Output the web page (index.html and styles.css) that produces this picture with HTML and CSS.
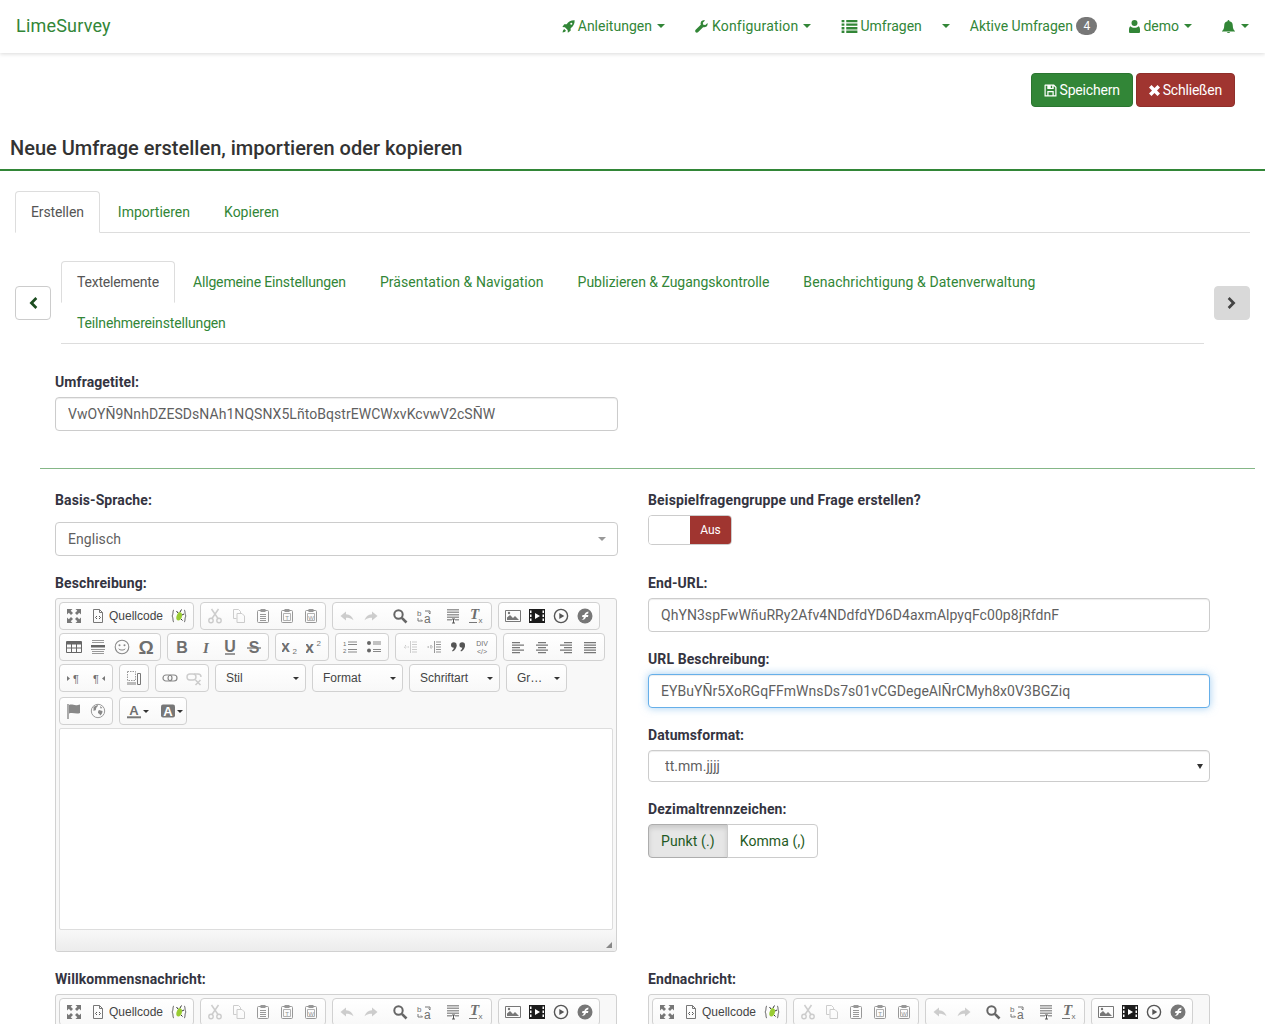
FILE: index.html
```html
<!DOCTYPE html>
<html lang="de">
<head>
    <meta charset="UTF-8">
    <title>Neue Umfrage erstellen</title>
    <link rel="stylesheet" href="styles.css">
</head>
<body>
<svg class="sprite" xmlns="http://www.w3.org/2000/svg">
    <!-- nav icons -->
    <symbol id="n-rocket" viewBox="0 0 14 14"><path d="M13.6.4C10 .2 7 1.700 5 4.600H2.400L.4 7.600l2.700.2 3 3 .2 2.800 3-2V9c2.900-2 4.500-5 4.300-8.600zM10 3a1.100 1.100 0 1 1 0 2.200A1.100 1.100 0 0 1 10 3zM2.400 9.700C1.300 10.500.8 11.800.6 13.400c1.600-.2 2.900-.7 3.700-1.800z"/></symbol>
    <symbol id="n-wrench" viewBox="0 0 14 14"><path d="M13.500 3.200 11.100 5.500 8.900 5 8.400 2.900 10.800.5C9 0 7.300.6 6.500 1.900c-.6 1-.7 2.100-.3 3.200L.7 10.600c-.7.700-.7 1.800 0 2.500s1.800.7 2.500 0l5.500-5.400c1.100.4 2.200.3 3.200-.3 1.300-.8 2-2.800 1.600-4.200z"/></symbol>
    <symbol id="n-list" viewBox="0 0 17 14"><path d="M0 0h3v2.500H0zM5 0h12v2.500H5zM0 3.800h3v2.500H0zM5 3.800h12v2.500H5zM0 7.600h3v2.500H0zM5 7.600h12v2.500H5zM0 11.400h3V14H0zM5 11.400h12V14H5z"/></symbol>
    <symbol id="n-user" viewBox="0 0 11 13"><circle cx="5.500" cy="3" r="3"/><path d="M1.500 6.200c1 1 2.500 1.500 4 1.500s3-.5 4-1.500c1 .4 1.500 1.800 1.500 3.500v2c0 .8-.5 1.300-1.300 1.300H1.300C.5 13 0 12.500 0 11.700v-2C0 8 .5 6.600 1.500 6.200z"/></symbol>
    <symbol id="n-bell" viewBox="0 0 15 14"><path d="M7.500 0c.6 0 1 .4 1 1v.4c2.200.4 3.600 2 3.600 4.400 0 3.400 1 4.800 2.400 6v.700H.5v-.700c1.400-1.200 2.400-2.600 2.400-6 0-2.400 1.400-4 3.600-4.400V1c0-.6.400-1 1-1zM5.800 13h3.400c0 .6-.8 1-1.700 1s-1.700-.4-1.700-1z"/></symbol>
    <symbol id="n-save" viewBox="0 0 13 13"><path d="M1 .5h9l2.500 2.500v9.500H.5V1zM1.700 1.700v9.600h1.600V7h6.400v4.300h1.600V3.500l-1.600-1.600V5H3.300V1.700zM4.500 8.200v3.100h4V8.200zM6.800 1.700V4h1.400V1.700z" fill-rule="evenodd"/></symbol>
    <symbol id="n-times" viewBox="0 0 11 11"><path d="M2.500 0 5.500 3 8.500 0 11 2.500l-3 3 3 3L8.500 11l-3-3-3 3L0 8.500l3-3-3-3z"/></symbol>
    <symbol id="n-left" viewBox="0 0 10 14"><path d="M7.400 1 9.300 3 5.400 7l3.900 4-1.900 2L1.500 7z"/></symbol>
    <symbol id="n-right" viewBox="0 0 10 14"><path d="M2.600 1 .7 3l3.900 4-3.900 4 1.900 2 5.900-6z"/></symbol>

    <!-- editor icons -->
    <symbol id="i-max" viewBox="0 0 16 16"><path d="M1 1h5.500L4.700 2.800 7 5 5 7 2.800 4.700 1 6.500zM15 1v5.500l-1.800-1.800L11 7 9 5l2.300-2.200L9.500 1zM1 15V9.500l1.800 1.800L5 9l2 2-2.300 2.200L6.500 15zM15 15H9.500l1.800-1.800L9 11l2-2 2.200 2.300L15 9.500z"/></symbol>
    <symbol id="i-source" viewBox="0 0 16 16"><path d="M3.500 1.500h6l3 3v10h-9zM9.500 1.500v3h3" fill="none" stroke="#777"/><path d="M7 8 5.500 9.500 7 11M9 8l1.500 1.500L9 11" fill="none" stroke="#555"/></symbol>
    <symbol id="i-bug" viewBox="0 0 16 16"><path d="M3 2C1.500 2 2.500 6.500 1 8c1.500 1.500.5 6 2 6M13 2c1.500 0 .5 4.500 2 6-1.500 1.500-.5 6-2 6" fill="none" stroke="#555"/><path d="M8.500 4c2.200.2 3.100 2.400 2.300 5-.7 2.400-2.600 4-4.300 3.300C4.900 11.700 5 9 6 7c.6-1.500 1.400-3 2.500-3z" fill="#9c3"/><path d="M9 4 10.500 1.500M7 5 5.500 3M11 7l2-1M10 11l1.500 1.500" stroke="#333" fill="none"/></symbol>
    <symbol id="i-cut" viewBox="0 0 16 16"><circle cx="4" cy="12.500" r="2.200" fill="none" stroke="#777" stroke-width="1.400"/><circle cx="12" cy="12.500" r="2.200" fill="none" stroke="#777" stroke-width="1.400"/><path d="M5 10.500 11.500 1M11 10.500 4.500 1" stroke="#777" stroke-width="1.500" fill="none"/></symbol>
    <symbol id="i-copy" viewBox="0 0 16 16"><path d="M2.500 1.500h5l2 2v2M2.500 1.500v9h3M6 5.500h5l2.500 2.500v6.500H6z" fill="none" stroke="#777"/></symbol>
    <symbol id="i-paste" viewBox="0 0 16 16"><path d="M3.500 2.500h9a1 1 0 0 1 1 1v10a1 1 0 0 1-1 1h-9a1 1 0 0 1-1-1v-10a1 1 0 0 1 1-1z" fill="none" stroke="#777"/><path d="M5.500 1h5v3h-5z" fill="#777"/><path d="M5 6.500h6M5 8.500h6M5 10.500h6M5 12.500h6" stroke="#777" fill="none"/></symbol>
    <symbol id="i-paste-t" viewBox="0 0 16 16"><path d="M3.500 2.500h9a1 1 0 0 1 1 1v10a1 1 0 0 1-1 1h-9a1 1 0 0 1-1-1v-10a1 1 0 0 1 1-1z" fill="none" stroke="#777"/><path d="M5.500 1h5v3h-5z" fill="#777"/><path d="M4.500 5.500h7v7h-7z" fill="none" stroke="#999"/><text x="8" y="11.500" class="ico-tiny" text-anchor="middle">T</text></symbol>
    <symbol id="i-paste-w" viewBox="0 0 16 16"><path d="M3.500 2.500h9a1 1 0 0 1 1 1v10a1 1 0 0 1-1 1h-9a1 1 0 0 1-1-1v-10a1 1 0 0 1 1-1z" fill="none" stroke="#777"/><path d="M5.500 1h5v3h-5z" fill="#777"/><path d="M4.500 5.500h7v7h-7z" fill="none" stroke="#999"/><text x="8" y="11.500" class="ico-tiny" text-anchor="middle">W</text></symbol>
    <symbol id="i-undo" viewBox="0 0 16 16"><path d="M7 3.500 1.500 8 7 12.500V9.800c2.800 0 5 .6 7.500 2.500C13.500 8.800 11 6.700 7 6.300z" fill="#777"/></symbol>
    <symbol id="i-redo" viewBox="0 0 16 16"><path d="M9 3.500 14.500 8 9 12.500V9.800c-2.800 0-5 .6-7.500 2.500C2.500 8.800 5 6.700 9 6.300z" fill="#777"/></symbol>
    <symbol id="i-find" viewBox="0 0 16 16"><circle cx="6.500" cy="6.500" r="4.200" fill="none" stroke="#666" stroke-width="2"/><path d="m9.800 9.800 4.700 4.700" stroke="#666" stroke-width="2.600" fill="none"/></symbol>
    <symbol id="i-replace" viewBox="0 0 16 16"><text x="1" y="8" class="ico-small">b</text><text x="8" y="15" class="ico-rep">a</text><path d="M9 3h5v3M14 6l-1.500-1.500M2 10v3h4.500M6.500 13 5 11.500" fill="none" stroke="#777"/></symbol>
    <symbol id="i-selectall" viewBox="0 0 16 16"><path d="M2 1h12v1.500H2zM2 3.500h12V5H2zM2 6h12v1.500H2zM2 8.500h12V10H2zM2 11h5v1.500H2zM10 11h4v1.500h-4z" fill="#999"/><path d="M7 11h3M7 15h3M8.500 11v4" stroke="#555" fill="none"/></symbol>
    <symbol id="i-clear" viewBox="0 0 16 16"><text x="1" y="11" class="ico-ital">T</text><text x="9.500" y="14.500" class="ico-small">x</text><path d="M0 14.500h8" stroke="#777" fill="none"/></symbol>
    <symbol id="i-image" viewBox="0 0 16 16"><path d="M.5 2.500h15v11H.5z" fill="none" stroke="#777"/><path d="M2 12V9.500L5 7l3 3 2-2 4 4z" fill="#777"/><circle cx="4" cy="5" r="1.200" fill="#777"/></symbol>
    <symbol id="i-video" viewBox="0 0 16 16"><path d="M0 1h16v14H0z" fill="#1c1c1c"/><path d="M1 2.500h1.500V5H1zM1 6.500h1.500V9H1zM1 10.500h1.500V13H1zM13.500 2.500H15V5h-1.500zM13.500 6.500H15V9h-1.500zM13.500 10.500H15V13h-1.500zM6 5l5 3-5 3z" fill="#fff"/></symbol>
    <symbol id="i-play" viewBox="0 0 16 16"><circle cx="8" cy="8" r="6.600" fill="none" stroke="#555" stroke-width="1.400"/><path d="m6.300 5 5 3-5 3z" fill="#555"/></symbol>
    <symbol id="i-flash" viewBox="0 0 16 16"><circle cx="8" cy="8" r="7.500" fill="#777"/><path d="M11.500 3.500C9 3.800 7.800 5.200 7.300 7H5.500L5 9h1.800c-.3 1.500-1 2.500-2.300 3 2.500 0 4-1.200 4.500-3h2l.4-2H9c.4-.8 1.200-1.300 2.200-1.500z" fill="#fff"/></symbol>
    <symbol id="i-table" viewBox="0 0 16 16"><path d="M.5 2.500h15v11H.5z" fill="none" stroke="#666"/><path d="M1 3h14v2.500H1z" fill="#666"/><path d="M1 9h14M5.500 5v8M10.500 5v8" stroke="#666" fill="none"/></symbol>
    <symbol id="i-hr" viewBox="0 0 16 16"><path d="M2 1.500h12M2 3.500h12M1 10.500h14M2 12.500h12M2 14.500h12" stroke="#999" fill="none"/><path d="M1 6h14v2.500H1z" fill="#666"/></symbol>
    <symbol id="i-smiley" viewBox="0 0 16 16"><circle cx="8" cy="8" r="6.800" fill="none" stroke="#888" stroke-width="1.100"/><circle cx="5.500" cy="6.300" r="1" fill="#888"/><circle cx="10.500" cy="6.300" r="1" fill="#888"/><path d="M4.700 9.800C5.500 11.500 10.500 11.500 11.300 9.800" fill="none" stroke="#888"/></symbol>
    <symbol id="i-omega" viewBox="0 0 16 16"><text x="8" y="14.500" class="ico-omega" text-anchor="middle">Ω</text></symbol>
    <symbol id="i-bold" viewBox="0 0 16 16"><text x="8" y="14" class="ico-big" text-anchor="middle">B</text></symbol>
    <symbol id="i-italic" viewBox="0 0 16 16"><text x="8" y="14" class="ico-ital" text-anchor="middle">I</text></symbol>
    <symbol id="i-under" viewBox="0 0 16 16"><text x="8" y="12.500" class="ico-big" text-anchor="middle">U</text><path d="M3 15h10" stroke="#777" stroke-width="1.500"/></symbol>
    <symbol id="i-strike" viewBox="0 0 16 16"><text x="8" y="14" class="ico-big" text-anchor="middle">S</text><path d="M1 9h14" stroke="#777" stroke-width="1.300"/></symbol>
    <symbol id="i-sub" viewBox="0 0 16 16"><text x="-1" y="12.500" class="ico-x">x</text><text x="10.500" y="15" class="ico-small">2</text></symbol>
    <symbol id="i-sup" viewBox="0 0 16 16"><text x="-1" y="13.500" class="ico-x">x</text><text x="10.500" y="7" class="ico-small">2</text></symbol>
    <symbol id="i-ol" viewBox="0 0 16 16"><text x="1" y="7" class="ico-tiny">1</text><text x="1" y="14" class="ico-tiny">2</text><path d="M6 3h9M6 5.500h9M6 10.500h9M6 13h9" stroke="#888" fill="none"/></symbol>
    <symbol id="i-ul" viewBox="0 0 16 16"><circle cx="3" cy="4" r="2" fill="#666"/><circle cx="3" cy="11.500" r="2" fill="#666"/><path d="M7 3h8M7 5h8M7 10.500h8M7 12.500h8" stroke="#888" fill="none"/></symbol>
    <symbol id="i-outdent" viewBox="0 0 16 16"><path d="M8.500 2v12M10 3h5M10 5.500h5M10 8h5M10 10.500h5M10 13h5" stroke="#777" fill="none"/><path d="M7 8H2M4 6 2 8l2 2" stroke="#777" stroke-dasharray="1.500 1" fill="none"/></symbol>
    <symbol id="i-indent" viewBox="0 0 16 16"><path d="M8.500 2v12M10 3h5M10 5.500h5M10 8h5M10 10.500h5M10 13h5" stroke="#777" fill="none"/><path d="M1.500 8h5M4.500 6l2 2-2 2" stroke="#777" stroke-dasharray="1.500 1" fill="none"/></symbol>
    <symbol id="i-quote" viewBox="0 0 16 16"><circle cx="3.800" cy="6" r="2.800" fill="#555"/><circle cx="12.200" cy="6" r="2.800" fill="#555"/><path d="M6.600 6c0 3-1.500 5.500-4 6.500l-.5-1C3.500 10.500 4 9 4 8zM15 6c0 3-1.500 5.500-4 6.500l-.5-1c1.400-1 1.900-2.500 1.900-3.500z" fill="#555"/></symbol>
    <symbol id="i-div" viewBox="0 0 16 16"><text x="8" y="7" class="ico-div" text-anchor="middle">DIV</text><text x="8" y="15" class="ico-div" text-anchor="middle">&lt;/&gt;</text></symbol>
    <symbol id="i-left" viewBox="0 0 16 16"><path d="M2 3h8v1.200H2zM2 5.500h12v1.200H2zM2 8h8v1.200H2zM2 10.500h12v1.200H2zM2 13h8v1.200H2z" fill="#777"/></symbol>
    <symbol id="i-center" viewBox="0 0 16 16"><path d="M4 3h8v1.200H4zM2 5.500h12v1.200H2zM4 8h8v1.200H4zM2 10.500h12v1.200H2zM4 13h8v1.200H4z" fill="#777"/></symbol>
    <symbol id="i-right" viewBox="0 0 16 16"><path d="M6 3h8v1.200H6zM2 5.500h12v1.200H2zM6 8h8v1.200H6zM2 10.500h12v1.200H2zM6 13h8v1.200H6z" fill="#777"/></symbol>
    <symbol id="i-just" viewBox="0 0 16 16"><path d="M2 3h12v1.200H2zM2 5.500h12v1.200H2zM2 8h12v1.200H2zM2 10.500h12v1.200H2zM2 13h12v1.200H2z" fill="#777"/></symbol>
    <symbol id="i-ltr" viewBox="0 0 16 16"><path d="m1 6 3 2.500L1 11z" fill="#777"/><text x="10" y="13" class="ico-mid2" text-anchor="middle">¶</text></symbol>
    <symbol id="i-rtl" viewBox="0 0 16 16"><path d="m15 6-3 2.500 3 2.500z" fill="#777"/><text x="6" y="13" class="ico-mid2" text-anchor="middle">¶</text></symbol>
    <symbol id="i-blocks" viewBox="0 0 16 16"><path d="M1.500 1.500h8v9h-8z" fill="none" stroke="#999" stroke-dasharray="1.500 1"/><path d="M1 12h9v3H1z" fill="#bbb"/><path d="M11.500 3.500h3v11h-3z" fill="none" stroke="#777"/></symbol>
    <symbol id="i-link" viewBox="0 0 16 16"><rect x="1" y="5" width="9" height="6" rx="3" fill="none" stroke="#888" stroke-width="1.200"/><rect x="6" y="5" width="9" height="6" rx="3" fill="none" stroke="#888" stroke-width="1.200"/></symbol>
    <symbol id="i-unlink" viewBox="0 0 16 16"><rect x="1" y="4" width="9" height="6" rx="3" fill="none" stroke="#777" stroke-width="1.400"/><path d="M8 4h4a3 3 0 0 1 3 3" fill="none" stroke="#777" stroke-width="1.400"/><path d="m9.500 10 5 5M14.500 10l-5 5" stroke="#777" stroke-width="1.500"/></symbol>
    <symbol id="i-flag" viewBox="0 0 16 16"><path d="M2 1v15" stroke="#888" stroke-width="1.400"/><path d="M3 2c3-1.500 5 1 9 0l2-.5V10c-4 1.500-7-1-11 .5z" fill="#888"/></symbol>
    <symbol id="i-globe" viewBox="0 0 16 16"><circle cx="8" cy="8" r="6.700" fill="none" stroke="#999" stroke-width="1"/><path d="M3.500 4c2-1 3-1.700 4.500-2 0 2-2 2-2 4s-1.500 1-2.500 2zM9 7l3.500 1c0 2-1 3.500-2.500 4.500 0-2-1-1.500-2-2.500 0-1 0-2 1-3zM10 3l2.500 2-2 .5z" fill="#888"/></symbol>
    <symbol id="i-color" viewBox="0 0 16 16"><text x="8" y="11.500" class="ico-big2" text-anchor="middle">A</text><path d="M1 14.300h14" stroke="#777" stroke-width="2"/></symbol>
    <symbol id="i-bg" viewBox="0 0 16 16"><rect x="1" y="1.500" width="14" height="13" rx="2" fill="#777"/><text x="8" y="12.500" class="ico-big2 ico-white" text-anchor="middle">A</text></symbol>
</svg>

<nav class="topbar">
    <a class="brand" href="#">LimeSurvey</a>
    <ul class="topnav">
        <li><a href="#"><svg class="nico"><use href="#n-rocket"/></svg>Anleitungen<i class="caret"></i></a></li>
        <li><a href="#" class="konfig"><svg class="nico nico-wrench"><use href="#n-wrench"/></svg>Konfiguration<i class="caret"></i></a></li>
        <li><a href="#" class="tight"><svg class="nico nico-list"><use href="#n-list"/></svg>Umfragen</a></li>
        <li><a href="#" class="only-caret"><i class="caret"></i></a></li>
        <li><a href="#" class="badged">Aktive Umfragen <span class="badge">4</span></a></li>
        <li><a href="#" class="demo"><svg class="nico nico-user"><use href="#n-user"/></svg>demo<i class="caret"></i></a></li>
        <li><a href="#" class="alerts"><svg class="nico nico-bell"><use href="#n-bell"/></svg><i class="caret"></i></a></li>
    </ul>
</nav>

<div class="actions">
    <a class="btn btn-save" href="#"><svg class="bico"><use href="#n-save"/></svg>Speichern</a>
    <a class="btn btn-close" href="#"><svg class="bico bico-x"><use href="#n-times"/></svg>Schließen</a>
</div>

<h3 class="pagetitle">Neue Umfrage erstellen, importieren oder kopieren</h3>

<div class="content">
    <ul class="tabs">
        <li class="active"><a href="#">Erstellen</a></li>
        <li><a href="#">Importieren</a></li>
        <li><a href="#">Kopieren</a></li>
    </ul>

    <div class="scroller">
        <button class="arrow" type="button"><svg class="aico"><use href="#n-left"/></svg></button>
        <ul class="tabs tabs-wrap">
            <li class="active"><a href="#">Textelemente</a></li>
            <li class="tnarrow"><a href="#">Allgemeine Einstellungen</a></li>
            <li class="twide"><a href="#">Präsentation &amp; Navigation</a></li>
            <li class="tslim"><a href="#">Publizieren &amp; Zugangskontrolle</a></li>
            <li class="twide"><a href="#">Benachrichtigung &amp; Datenverwaltung</a></li>
            <li class="tnarrow"><a href="#">Teilnehmereinstellungen</a></li>
        </ul>
        <button class="arrow arrow-off" type="button"><svg class="aico"><use href="#n-right"/></svg></button>
    </div>

    <div class="titlebox">
        <label class="lbl">Umfragetitel:</label>
        <input class="field" type="text" value="VwOYÑ9NnhDZESDsNAh1NQSNX5LñtoBqstrEWCWxvKcvwV2cSÑW">
    </div>
    <hr class="sep">

    <div class="cols">
        <div class="group group-lang">
            <label class="lbl lbl-wide">Basis-Sprache:</label>
            <div class="field fake-select">Englisch<i class="caret caret-grey"></i></div>
        </div>
        <div class="group">
            <label class="lbl lbl-long">Beispielfragengruppe und Frage erstellen?</label>
            <div class="toggle"><span class="toggle-blank"></span><span class="toggle-off">Aus</span></div>
        </div>

        <div class="group">
            <label class="lbl">Beschreibung:</label>
            <div class="editor">
                <div class="tb-row">
                    <span class="tb"><a class="b"><svg class="ico"><use href="#i-max"/></svg></a><a class="b b-src"><svg class="ico"><use href="#i-source"/></svg><span>Quellcode</span></a><a class="b"><svg class="ico"><use href="#i-bug"/></svg></a></span>
                    <span class="tb"><a class="b off"><svg class="ico"><use href="#i-cut"/></svg></a><a class="b off"><svg class="ico"><use href="#i-copy"/></svg></a><a class="b dim"><svg class="ico"><use href="#i-paste"/></svg></a><a class="b dim"><svg class="ico"><use href="#i-paste-t"/></svg></a><a class="b dim"><svg class="ico"><use href="#i-paste-w"/></svg></a></span>
                    <span class="tb"><a class="b off"><svg class="ico"><use href="#i-undo"/></svg></a><a class="b off"><svg class="ico"><use href="#i-redo"/></svg></a><i class="tsep"></i><a class="b"><svg class="ico"><use href="#i-find"/></svg></a><a class="b"><svg class="ico"><use href="#i-replace"/></svg></a><i class="tsep"></i><a class="b"><svg class="ico"><use href="#i-selectall"/></svg></a><a class="b"><svg class="ico"><use href="#i-clear"/></svg></a></span>
                    <span class="tb"><a class="b"><svg class="ico"><use href="#i-image"/></svg></a><a class="b"><svg class="ico"><use href="#i-video"/></svg></a><a class="b"><svg class="ico"><use href="#i-play"/></svg></a><a class="b"><svg class="ico"><use href="#i-flash"/></svg></a></span>
                </div>
                <div class="tb-row">
                    <span class="tb"><a class="b"><svg class="ico"><use href="#i-table"/></svg></a><a class="b"><svg class="ico"><use href="#i-hr"/></svg></a><a class="b"><svg class="ico"><use href="#i-smiley"/></svg></a><a class="b"><svg class="ico"><use href="#i-omega"/></svg></a></span>
                    <span class="tb"><a class="b"><svg class="ico"><use href="#i-bold"/></svg></a><a class="b"><svg class="ico"><use href="#i-italic"/></svg></a><a class="b"><svg class="ico"><use href="#i-under"/></svg></a><a class="b"><svg class="ico"><use href="#i-strike"/></svg></a></span>
                    <span class="tb"><a class="b"><svg class="ico"><use href="#i-sub"/></svg></a><a class="b"><svg class="ico"><use href="#i-sup"/></svg></a></span>
                    <span class="tb"><a class="b"><svg class="ico"><use href="#i-ol"/></svg></a><a class="b"><svg class="ico"><use href="#i-ul"/></svg></a></span>
                    <span class="tb"><a class="b off"><svg class="ico"><use href="#i-outdent"/></svg></a><a class="b dim"><svg class="ico"><use href="#i-indent"/></svg></a><a class="b"><svg class="ico"><use href="#i-quote"/></svg></a><a class="b"><svg class="ico"><use href="#i-div"/></svg></a></span>
                    <span class="tb"><a class="b"><svg class="ico"><use href="#i-left"/></svg></a><a class="b"><svg class="ico"><use href="#i-center"/></svg></a><a class="b"><svg class="ico"><use href="#i-right"/></svg></a><a class="b"><svg class="ico"><use href="#i-just"/></svg></a></span>
                </div>
                <div class="tb-row">
                    <span class="tb"><a class="b"><svg class="ico"><use href="#i-ltr"/></svg></a><a class="b"><svg class="ico"><use href="#i-rtl"/></svg></a></span>
                    <span class="tb"><a class="b"><svg class="ico"><use href="#i-blocks"/></svg></a></span>
                    <span class="tb"><a class="b"><svg class="ico"><use href="#i-link"/></svg></a><a class="b off"><svg class="ico"><use href="#i-unlink"/></svg></a></span>
                    <span class="tb combo">Stil<i class="combo-arrow"></i></span>
                    <span class="tb combo">Format<i class="combo-arrow"></i></span>
                    <span class="tb combo">Schriftart<i class="combo-arrow"></i></span>
                    <span class="tb combo combo-short">Gr…<i class="combo-arrow"></i></span>
                </div>
                <div class="tb-row tb-last">
                    <span class="tb"><a class="b"><svg class="ico"><use href="#i-flag"/></svg></a><a class="b"><svg class="ico"><use href="#i-globe"/></svg></a></span>
                    <span class="tb"><a class="b b-color"><svg class="ico"><use href="#i-color"/></svg><i class="mini-arrow"></i></a><a class="b b-color"><svg class="ico"><use href="#i-bg"/></svg><i class="mini-arrow"></i></a></span>
                </div>
                <div class="edit-area"></div>
                <div class="edit-foot"><i class="grip"></i></div>
            </div>
        </div>

        <div class="stack">
            <div class="group">
                <label class="lbl">End-URL:</label>
                <input class="field" type="text" value="QhYN3spFwWñuRRy2Afv4NDdfdYD6D4axmAlpyqFc00p8jRfdnF">
            </div>
            <div class="group">
                <label class="lbl">URL Beschreibung:</label>
                <input class="field field-focus" type="text" value="EYBuYÑr5XoRGqFFmWnsDs7s01vCGDegeAlÑrCMyh8x0V3BGZiq">
            </div>
            <div class="group">
                <label class="lbl">Datumsformat:</label>
                <div class="select-wrap"><select class="field native"><option>tt.mm.jjjj</option></select></div>
            </div>
            <div class="group">
                <label class="lbl">Dezimaltrennzeichen:</label>
                <div class="btn-group"><span class="seg seg-on">Punkt (.)</span><span class="seg">Komma (,)</span></div>
            </div>
        </div>

        <div class="group">
            <label class="lbl">Willkommensnachricht:</label>
            <div class="editor">
                <div class="tb-row">
                    <span class="tb"><a class="b"><svg class="ico"><use href="#i-max"/></svg></a><a class="b b-src"><svg class="ico"><use href="#i-source"/></svg><span>Quellcode</span></a><a class="b"><svg class="ico"><use href="#i-bug"/></svg></a></span>
                    <span class="tb"><a class="b off"><svg class="ico"><use href="#i-cut"/></svg></a><a class="b off"><svg class="ico"><use href="#i-copy"/></svg></a><a class="b dim"><svg class="ico"><use href="#i-paste"/></svg></a><a class="b dim"><svg class="ico"><use href="#i-paste-t"/></svg></a><a class="b dim"><svg class="ico"><use href="#i-paste-w"/></svg></a></span>
                    <span class="tb"><a class="b off"><svg class="ico"><use href="#i-undo"/></svg></a><a class="b off"><svg class="ico"><use href="#i-redo"/></svg></a><i class="tsep"></i><a class="b"><svg class="ico"><use href="#i-find"/></svg></a><a class="b"><svg class="ico"><use href="#i-replace"/></svg></a><i class="tsep"></i><a class="b"><svg class="ico"><use href="#i-selectall"/></svg></a><a class="b"><svg class="ico"><use href="#i-clear"/></svg></a></span>
                    <span class="tb"><a class="b"><svg class="ico"><use href="#i-image"/></svg></a><a class="b"><svg class="ico"><use href="#i-video"/></svg></a><a class="b"><svg class="ico"><use href="#i-play"/></svg></a><a class="b"><svg class="ico"><use href="#i-flash"/></svg></a></span>
                </div>
            </div>
        </div>
        <div class="group">
            <label class="lbl">Endnachricht:</label>
            <div class="editor">
                <div class="tb-row">
                    <span class="tb"><a class="b"><svg class="ico"><use href="#i-max"/></svg></a><a class="b b-src"><svg class="ico"><use href="#i-source"/></svg><span>Quellcode</span></a><a class="b"><svg class="ico"><use href="#i-bug"/></svg></a></span>
                    <span class="tb"><a class="b off"><svg class="ico"><use href="#i-cut"/></svg></a><a class="b off"><svg class="ico"><use href="#i-copy"/></svg></a><a class="b dim"><svg class="ico"><use href="#i-paste"/></svg></a><a class="b dim"><svg class="ico"><use href="#i-paste-t"/></svg></a><a class="b dim"><svg class="ico"><use href="#i-paste-w"/></svg></a></span>
                    <span class="tb"><a class="b off"><svg class="ico"><use href="#i-undo"/></svg></a><a class="b off"><svg class="ico"><use href="#i-redo"/></svg></a><i class="tsep"></i><a class="b"><svg class="ico"><use href="#i-find"/></svg></a><a class="b"><svg class="ico"><use href="#i-replace"/></svg></a><i class="tsep"></i><a class="b"><svg class="ico"><use href="#i-selectall"/></svg></a><a class="b"><svg class="ico"><use href="#i-clear"/></svg></a></span>
                    <span class="tb"><a class="b"><svg class="ico"><use href="#i-image"/></svg></a><a class="b"><svg class="ico"><use href="#i-video"/></svg></a><a class="b"><svg class="ico"><use href="#i-play"/></svg></a><a class="b"><svg class="ico"><use href="#i-flash"/></svg></a></span>
                </div>
            </div>
        </div>
    </div>
</div>
</body>
</html>
```

FILE: styles.css
```css
* {
    box-sizing: border-box;
}
html, body {
    margin: 0;
    height: 1024px;
    overflow: hidden;
}
body {
    background: #fff;
    color: #333;
    font: 14px/20px Roboto, "Liberation Sans", sans-serif;
}
a {
    color: #328637;
    text-decoration: none;
}
ul {
    margin: 0;
    padding: 0;
    list-style: none;
}
.sprite {
    display: none;
}

/* top bar */
.topbar {
    display: flex;
    justify-content: space-between;
    align-items: center;
    height: 53px;
    padding-bottom: 1px;
    background: #fff;
    box-shadow: 0 1px 4px rgba(0,0,0,.15);
}
.brand {
    margin-left: 16px;
    font-size: 18px;
    letter-spacing: .2px;
}
.topnav {
    display: flex;
}
.topnav a {
    display: flex;
    align-items: center;
    height: 52px;
    padding: 0 15px;
}
.topnav a.konfig {
    letter-spacing: .2px;
}
.topnav a.tight {
    padding-right: 5px;
}
.topnav a.only-caret {
    padding: 0 5px 0 15px;
}
.topnav a.only-caret .caret {
    margin-left: 0;
}
.topnav a.badged {
    white-space: pre;
    padding-right: 17px;
}
.topnav a.demo {
    padding-right: 14px;
}
.topnav a.alerts {
    padding-right: 16px;
}
.nico {
    width: 13px;
    height: 13px;
    margin-right: 3px;
    fill: #328637;
}
.nico-wrench {
    margin-right: 4px;
}
.nico-list {
    width: 17px;
    margin-right: 2px;
}
.nico-user {
    width: 11px;
    margin-right: 3px;
}
.nico-bell {
    width: 15px;
    margin-right: 0;
}
.caret {
    display: inline-block;
    width: 0;
    height: 0;
    margin-left: 5px;
    border-top: 4px solid #328637;
    border-left: 4px solid transparent;
    border-right: 4px solid transparent;
}
.badge {
    display: inline-block;
    min-width: 21px;
    height: 18px;
    margin-left: 0;
    padding: 0 6px;
    border-radius: 10px;
    background: #777;
    color: #fff;
    font-size: 12px;
    line-height: 18px;
    text-align: center;
}

/* save / close */
.actions {
    display: flex;
    justify-content: flex-end;
    gap: 3px;
    padding: 20px 30px 0 0;
}
.btn {
    display: flex;
    align-items: center;
    height: 34px;
    padding: 0 12px;
    border-radius: 4px;
    color: #fff;
    letter-spacing: -.2px;
}
.btn-save {
    background: #328637;
    border: 1px solid #2b7530;
}
.btn-close {
    background: #a03530;
    border: 1px solid #8f2f2a;
}
.bico {
    width: 13px;
    height: 13px;
    margin-right: 3px;
    fill: #fff;
}
.bico-x {
    width: 11px;
    height: 11px;
}
.pagetitle {
    margin: 25px 0 0;
    padding: 0 10px 4px;
    border-bottom: 2px solid #328637;
    color: #333;
    font-size: 20px;
    font-weight: 500;
    line-height: 33px;
}

/* tabs */
.content {
    padding: 20px 15px 0;
}
.tabs {
    display: flex;
    flex-wrap: wrap;
    border-bottom: 1px solid #ddd;
}
.tabs li {
    margin-right: 2px;
    margin-bottom: -1px;
}
.tabs a {
    display: block;
    height: 42px;
    padding: 10px 15px;
    border: 1px solid transparent;
    border-radius: 4px 4px 0 0;
}
.tabs .active a {
    border-color: #ddd #ddd #fff;
    background: #fff;
    color: #555;
    letter-spacing: -.12px;
}
.tabs-wrap .active a {
    letter-spacing: -.2px;
}
.tabs .tnarrow a {
    letter-spacing: -.15px;
}
.tabs .twide a {
    letter-spacing: .08px;
}
.tabs .tslim a {
    letter-spacing: -.04px;
}
.scroller {
    display: flex;
    align-items: flex-start;
    gap: 10px;
    margin-top: 28px;
}
.tabs-wrap {
    flex: 1;
}
.arrow {
    flex: none;
    width: 36px;
    height: 34px;
    margin-top: 25px;
    padding: 0;
    border: 1px solid #ccc;
    border-radius: 4px;
    background: #fff;
}
.arrow-off {
    background: #d9d9d9;
    border-color: #d9d9d9;
}
.aico {
    width: 10px;
    height: 14px;
    margin-top: 3px;
    fill: #1c4d20;
}
.arrow-off .aico {
    fill: #444;
}

/* form */
.titlebox {
    margin: 28px 0 0 40px;
    width: 563px;
}
.lbl {
    display: block;
    margin-bottom: 5px;
    color: #343441;
    font-weight: 700;
    letter-spacing: .1px;
}
.lbl-long {
    letter-spacing: .15px;
}
.lbl-wide {
    margin-bottom: 12px;
}
.field {
    display: block;
    width: 100%;
    height: 34px;
    padding: 6px 12px;
    border: 1px solid #ccc;
    border-radius: 4px;
    background: #fff;
    color: #5f5f5f;
    font: 14px/20px Roboto, "Liberation Sans", sans-serif;
    letter-spacing: .05px;
    box-shadow: inset 0 1px 1px rgba(0,0,0,.075);
    outline: none;
}
.field-focus {
    border-color: #66afe9;
    box-shadow: inset 0 1px 1px rgba(0,0,0,.075), 0 0 8px rgba(102,175,233,.6);
}
.select-wrap {
    position: relative;
}
.select-wrap::after {
    content: "";
    position: absolute;
    right: 7px;
    top: 14px;
    border-top: 5px solid #333;
    border-left: 3px solid transparent;
    border-right: 3px solid transparent;
}
.native {
    height: 32px;
    padding: 0 16px;
    appearance: none;
}
.fake-select {
    position: relative;
    box-shadow: none;
}
.caret-grey {
    position: absolute;
    right: 11px;
    top: 14px;
    border-top-color: #999;
}
.sep {
    height: 0;
    margin: 37px -5px 21px 25px;
    border: 0;
    border-top: 1px solid #85b787;
}
.cols {
    display: grid;
    grid-template-columns: 563px 562px;
    column-gap: 30px;
    margin-left: 40px;
    align-items: start;
}
.group {
    margin-bottom: 17px;
    min-width: 0;
}
.stack .group:last-child {
    margin-bottom: 0;
}
.toggle {
    display: flex;
    width: 84px;
    height: 30px;
    border: 1px solid #ccc;
    border-radius: 4px;
    overflow: hidden;
    font-size: 12px;
}
.toggle-blank {
    width: 41px;
    background: #fff;
}
.toggle-off {
    flex: 1;
    background: #a03530;
    color: #fff;
    line-height: 28px;
    text-align: center;
}
.btn-group {
    display: flex;
}
.seg {
    height: 34px;
    padding: 6px 12px;
    border: 1px solid #ccc;
    border-radius: 0 4px 4px 0;
    margin-left: -1px;
    color: #1f5a24;
    letter-spacing: .1px;
}
.seg-on {
    margin-left: 0;
    border-color: #adadad;
    border-radius: 4px 0 0 4px;
    background: #e6e6e6;
    box-shadow: inset 0 3px 5px rgba(0,0,0,.125);
}

/* rich text editor */
.editor {
    width: 562px;
    padding: 3px 3px 0;
    border: 1px solid #d1d1d1;
    border-radius: 3px;
    background: #f8f8f8;
}
.tb-row {
    display: flex;
    gap: 6px;
    margin-bottom: 3px;
}
.tb-last {
    margin-top: 5px;
}
.tb {
    display: flex;
    height: 28px;
    padding: 0 2px;
    border: 1px solid #d1d1d1;
    border-radius: 4px;
    background: linear-gradient(#fff, #f8f8f8);
}
.b {
    display: flex;
    align-items: center;
    justify-content: center;
    min-width: 24px;
    height: 26px;
    color: #444;
}
.b-src {
    gap: 3px;
    padding: 0 4px;
    font: 12px "Liberation Sans", Arial, sans-serif;
}
.b-color {
    justify-content: flex-start;
    width: 28px;
    padding-left: 4px;
}
.b-color + .b-color {
    margin-left: 6px;
}
.ico {
    flex: none;
    width: 16px;
    height: 16px;
    fill: #777;
}
.off .ico {
    opacity: .35;
}
.dim .ico {
    opacity: .75;
}
.ico-big, .ico-big2, .ico-mid2, .ico-small, .ico-tiny, .ico-ital, .ico-x, .ico-omega, .ico-rep, .ico-div {
    fill: #6f6f6f;
}
.ico-big {
    font: bold 16px "Liberation Sans", sans-serif;
}
.ico-big2 {
    font: bold 13px "Liberation Sans", sans-serif;
}
.ico-white {
    fill: #fff;
}
.ico-omega {
    font: bold 19px "Liberation Sans", sans-serif;
}
.ico-x {
    font: bold 16px "Liberation Sans", sans-serif;
}
.ico-rep {
    font: 12px "Liberation Sans", sans-serif;
}
.ico-div {
    font: 7px "Liberation Sans", sans-serif;
}
.ico-mid2 {
    font: 11px "Liberation Sans", sans-serif;
}
.ico-small {
    font: 8px "Liberation Sans", sans-serif;
}
.ico-tiny {
    font: 6px "Liberation Sans", sans-serif;
}
.ico-ital {
    font: italic bold 15px "Liberation Serif", serif;
}
.tsep {
    width: 5px;
}
.combo {
    position: relative;
    width: 91px;
    padding: 0 10px;
    color: #444;
    font: 12px/26px "Liberation Sans", Arial, sans-serif;
}
.combo-short {
    width: 61px;
}
.combo-arrow {
    position: absolute;
    right: 6px;
    top: 12px;
    border-top: 3px solid #333;
    border-left: 3px solid transparent;
    border-right: 3px solid transparent;
}
.mini-arrow {
    margin-left: 1px;
    border-top: 3px solid #333;
    border-left: 3px solid transparent;
    border-right: 3px solid transparent;
}
.edit-area {
    width: 554px;
    height: 202px;
    margin-top: 3px;
    background: #fff;
    border: 1px solid #ddd;
    border-radius: 2px;
}
.edit-foot {
    position: relative;
    height: 21px;
    margin: 0 -3px;
    background: linear-gradient(#f8f8f8, #ececec);
    border-radius: 0 0 3px 3px;
}
.grip {
    position: absolute;
    right: 4px;
    bottom: 3px;
    border-bottom: 6px solid #888;
    border-left: 6px solid transparent;
}
```
